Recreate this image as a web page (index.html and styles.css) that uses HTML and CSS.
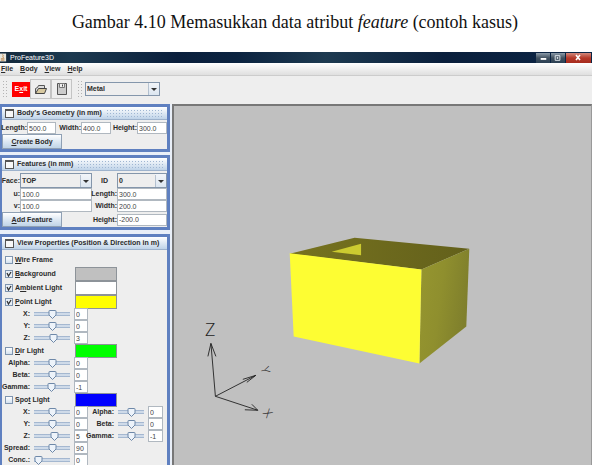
FILE: index.html
```html
<!DOCTYPE html>
<html lang="id">
<head>
<meta charset="utf-8">
<title>ProFeature3D</title>
<link rel="stylesheet" href="styles.css">
</head>
<body>
<h1 class="caption">Gambar 4.10 Memasukkan data atribut <em>feature</em> (contoh kasus)</h1>
<main class="window">
  <header class="titlebar">
    <svg class="app-icon" viewBox="0 0 8 9" aria-hidden="true"><path fill="#e8e6dc" d="M0 0h7v9H0z"/><path d="M3 1c2 1-1 2 1 4M1 6h4M1 7.5h4" fill="none" stroke="#b97a3a"/></svg>
    <span class="title">ProFeature3D</span>
    <div class="controls">
      <button class="ctl" aria-label="Minimize"><svg viewBox="0 0 15 10"><path d="M5 5h6v2H5z" fill="#fff"/></svg></button>
      <button class="ctl" aria-label="Maximize"><svg viewBox="0 0 15 10"><path d="M4.500 2.500h5v5h-5zM6.500 4.500h1v1h-1z" fill="none" stroke="#e4ebf0"/></svg></button>
      <button class="ctl close" aria-label="Close"><svg viewBox="0 0 25 10"><path d="M10 2l4 5M14 2l-4 5" stroke="#fff" stroke-width="1.600"/></svg></button>
    </div>
  </header>
  <nav class="menu">
    <a href="#"><u>F</u>ile</a><a href="#"><u>B</u>ody</a><a href="#"><u>V</u>iew</a><a href="#"><u>H</u>elp</a>
  </nav>
  <div class="toolbar">
    <span class="grip"></span>
    <button class="tool exit"><span>E<u>x</u>it</span></button>
    <button class="tool" aria-label="Open"><svg viewBox="0 0 14 12"><path d="M1.500 10.500V5.500l2-1 1-2h6v3" fill="#ddd" stroke="#555"/><path d="M1.500 10.500l3-5h8l-2 5z" fill="#d8c9a0" stroke="#444"/></svg></button>
    <button class="tool" aria-label="Save"><svg viewBox="0 0 14 12"><path d="M2.500.5h9v11h-9z" fill="#ccc" stroke="#555"/><path d="M4.500.5h5v4h-5z" fill="#eee" stroke="#777"/><path d="M7.500 1.500v2" stroke="#444"/></svg></button>
    <span class="grip second"></span>
    <select class="combo material" aria-label="Material"><option>Metal</option></select>
  </div>
  <div class="work">
    <aside class="side">
      <section class="panel">
        <h2 class="head"><span class="frame-icon"></span>Body's Geometry (in mm)<i class="dots"></i></h2>
        <div class="dims">
          <label for="bl">Length:</label><input id="bl" value="500.0">
          <label for="bw">Width:</label><input id="bw" value="400.0">
          <label for="bh">Height:</label><input id="bh" value="300.0">
        </div>
        <button class="push"><u>C</u>reate Body</button>
      </section>
      <section class="panel">
        <h2 class="head"><span class="frame-icon"></span>Features (in mm)<i class="dots"></i></h2>
        <div class="features">
          <label for="face">Face:</label><select class="combo" id="face"><option>TOP</option></select>
          <label class="mid" for="fid">ID</label><select class="combo" id="fid"><option>0</option></select>
          <label for="fu">u:</label><input id="fu" value="100.0">
          <label for="fl">Length:</label><input id="fl" value="300.0">
          <label for="fv">v:</label><input id="fv" value="100.0">
          <label for="fw">Width:</label><input id="fw" value="200.0">
          <button class="push"><u>A</u>dd Feature</button>
          <label for="fh">Height:</label><input id="fh" value="-200.0">
        </div>
      </section>
      <section class="panel view">
        <h2 class="head"><span class="frame-icon"></span>View Properties (Position &amp; Direction in m)<i class="dots"></i></h2>
        <div class="toggles">
          <div class="toggle"><label><input type="checkbox"><span><u>W</u>ire Frame</span></label></div>
          <div class="toggle"><label><input type="checkbox" checked><span><u>B</u>ackground</span></label><button class="swatch gray" aria-label="Background color"></button></div>
          <div class="toggle"><label><input type="checkbox" checked><span>A<u>m</u>bient Light</span></label><button class="swatch white" aria-label="Ambient color"></button></div>
          <div class="toggle"><label><input type="checkbox" checked><span><u>P</u>oint Light</span></label><button class="swatch yellow" aria-label="Point color"></button></div>
        </div>
        <div class="sliders">
          <label for="px">X:</label><input type="range" id="px" value="50"><input aria-label="Point X" value="0">
          <label for="py">Y:</label><input type="range" id="py" value="50"><input aria-label="Point Y" value="0">
          <label for="pz">Z:</label><input type="range" id="pz" value="55"><input aria-label="Point Z" value="3">
        </div>
        <div class="toggle"><label><input type="checkbox"><span><u>D</u>ir Light</span></label><button class="swatch green" aria-label="Dir color"></button></div>
        <div class="sliders">
          <label for="da">Alpha:</label><input type="range" id="da" value="50"><input aria-label="Dir Alpha" value="0">
          <label for="db">Beta:</label><input type="range" id="db" value="50"><input aria-label="Dir Beta" value="0">
          <label for="dg">Gamma:</label><input type="range" id="dg" value="48"><input aria-label="Dir Gamma" value="-1">
        </div>
        <div class="toggle"><label><input type="checkbox"><span>Spo<u>t</u> Light</span></label><button class="swatch blue" aria-label="Spot color"></button></div>
        <div class="spot">
          <div class="sliders">
            <label for="sx">X:</label><input type="range" id="sx" value="50"><input aria-label="Spot X" value="0">
            <label for="sy">Y:</label><input type="range" id="sy" value="50"><input aria-label="Spot Y" value="0">
            <label for="sz">Z:</label><input type="range" id="sz" value="58"><input aria-label="Spot Z" value="5">
            <label for="sp">Spread:</label><input type="range" id="sp" value="50"><input aria-label="Spot Spread" value="90">
            <label for="sc">Conc.:</label><input type="range" id="sc" value="0"><input aria-label="Spot Concentration" value="0">
          </div>
          <div class="sliders angles">
            <label for="sa">Alpha:</label><input type="range" id="sa" value="52"><input aria-label="Spot Alpha" value="0">
            <label for="sb">Beta:</label><input type="range" id="sb" value="52"><input aria-label="Spot Beta" value="0">
            <label for="sg">Gamma:</label><input type="range" id="sg" value="52"><input aria-label="Spot Gamma" value="-1">
          </div>
        </div>
      </section>
    </aside>
    <div class="canvas">
      <svg class="scene" viewBox="174 106 418 359" preserveAspectRatio="xMinYMin meet" role="img" aria-label="3D body">
        <defs>
          <linearGradient id="side" x1="0" y1="0" x2="1" y2=".3"><stop offset="0" stop-color="#96962f"/><stop offset=".5" stop-color="#8f8f2e"/><stop offset="1" stop-color="#7f7f2c"/></linearGradient>
          <linearGradient id="top" x1="0" y1="0" x2="1" y2="0"><stop offset="0" stop-color="#77731f"/><stop offset="1" stop-color="#63601b"/></linearGradient>
        </defs>
        <path fill="url(#top)" d="M290 254L355 238 470 249 422 270z"/>
        <path fill="#cccb30" d="M332 252l29.500-8v11.500z"/>
        <path fill="url(#side)" d="M422 270l48-21-3 78-47 37z"/>
        <path fill="#fdfd33" d="M290 253.500L422 270l-2 94-126-27z"/>
        <g fill="none" stroke="#222" stroke-width=".9">
          <path d="M215.500 397L211 344M208 357l3-13 5 13M215.500 397l40.500-21M243 380l13-4-9 7M215.500 397l42.500 14M252 405l6 6-13-.5"/>
        </g>
        <g class="axis">
          <text x="205" y="337">Z</text>
          <text transform="translate(264 373) rotate(75)" class="small" x="-5" y="2">Y</text>
          <text transform="translate(269 414) rotate(50)" class="small" x="-4" y="5">X</text>
        </g>
      </svg>
    </div>
  </div>
</main>
</body>
</html>
```
FILE: styles.css
```css
* { box-sizing: border-box; }
body {
  margin: 0;
  height: 100vh;
  overflow: hidden;
  display: flex;
  flex-direction: column;
  background: #fff;
  color: #2b2b2b;
  font: bold 7px/10px "Liberation Sans", Arial, sans-serif;
}
.caption {
  margin: 0;
  padding: 10px 6px 18px 0;
  text-align: center;
  font: 18px/24px "Liberation Serif", "Times New Roman", serif;
  color: #111;
}
.window {
  flex: 1;
  min-height: 0;
  margin-right: 4px;
  display: flex;
  flex-direction: column;
  background: #eee;
}
button, input, select { font: inherit; color: inherit; margin: 0; border-radius: 0; }
button { padding: 0; border: 0; }

.titlebar {
  display: flex;
  align-items: center;
  height: 11px;
  background: linear-gradient(90deg, #14293c, #1d3a50 12%, #0a1f3c 30%, #0b2340 40%, #1d3a50 55%, #0a1f3c 75%, #0b2545);
  color: #fff;
}
.app-icon { width: 7px; height: 9px; }
.title { margin-left: 3px; font-weight: normal; }
.controls { margin-left: auto; margin-right: 1px; display: flex; gap: 1px; }
.ctl { width: 14px; height: 10px; background: linear-gradient(#8b9aa8, #40505f 50%, #2b4054); }
.ctl svg { display: block; width: 100%; height: 100%; }
.close { width: 25px; background: linear-gradient(#d2897c, #b5392a 50%, #a62a1c); }

.menu {
  display: flex;
  gap: 7px;
  height: 13px;
  padding-left: 1px;
  align-items: center;
  background: linear-gradient(#fff, #dfdfdf);
  border-bottom: 1px solid #ccc;
}
.menu a { color: inherit; text-decoration: none; }

.toolbar { display: flex; align-items: center; height: 28px; padding: 2px 2px 4px; }
.grip {
  width: 6px;
  height: 18px;
  margin-right: 4px;
  background: radial-gradient(#b4b4b4 1px, transparent 1px) 0 0 / 3px 3px;
}
.second { margin: 0 2px 0 5px; }
.tool {
  width: 21px;
  height: 20px;
  display: grid;
  place-items: center;
  background: #eee;
  border: 1px solid #c4c4c4;
}
.tool svg { width: 14px; height: 12px; }
.exit { width: 18px; height: 15px; background: #f00; border: 0; color: #fff; }
.combo {
  appearance: none;
  width: 100%;
  height: 14px;
  padding: 0 0 0 1px;
  border: 1px solid #8496ab;
  background:
    url("data:image/svg+xml,%3Csvg xmlns='http://www.w3.org/2000/svg' width='11' height='12'%3E%3Cpath d='M0 0v12' stroke='%238496ab'/%3E%3Cpath d='M3 5h6l-3 3z' fill='%23333'/%3E%3C/svg%3E") right center no-repeat,
    linear-gradient(#f2f5f9, #dce6f0) right / 11px 100% no-repeat,
    #eee;
}
.material { width: 75px; }

.work { flex: 1; min-height: 0; display: flex; }
.side {
  width: 172px;
  flex: none;
  display: flex;
  flex-direction: column;
  gap: 3px;
  padding-right: 2px;
  background: #e9eff8;
}
.panel { flex: none; border: 3px solid #5f80c0; border-left-width: 2px; background: #eee; }
.panel.view { margin-top: 1px; }
.head {
  display: flex;
  align-items: center;
  height: 13px;
  margin: 0 0 2px;
  padding: 0 3px;
  font: inherit;
  white-space: nowrap;
  background: linear-gradient(#fff, #bfd3e8);
  border-bottom: 1px solid #9db2cc;
}
.frame-icon { flex: none; width: 9px; height: 9px; margin-right: 3px; background: #f8f8f8; border: 1px solid #555; border-top-width: 2px; }
.dots { flex: 1; height: 9px; margin-left: 4px; background: radial-gradient(#9fb6d2 1px, transparent 1px) 0 0 / 3px 3px; }
.push {
  width: 60px;
  height: 15px;
  justify-self: start;
  border: 1px solid #8fa0b4;
  background: linear-gradient(#fff, #dde8f3 50%, #c0d4e7);
}
input:not([type]) {
  min-width: 0;
  width: 100%;
  height: 12px;
  padding: 0 0 0 1px;
  border: 1px solid #b0b8c0;
  background: #fff;
  color: #444;
  font-weight: normal;
}
.dims { display: grid; grid-template-columns: 25px 29px 25px 30px 26px 30px; align-items: center; white-space: nowrap; }
.dims label { justify-self: end; }
.panel > .push { display: block; }
.features { display: grid; grid-template-columns: 18px 72px 25px 50px; align-items: center; }
.features label { justify-self: end; white-space: nowrap; }
.features .mid { justify-self: center; }
.features .push { grid-column: span 2; }
.features .combo { height: 15px; }

.toggles { display: grid; gap: 1px; padding-top: 1px; }
.toggle { display: grid; grid-template-columns: 73px 42px; height: 13px; align-items: center; }
.toggle label { display: flex; align-items: center; gap: 2px; padding-left: 3px; white-space: nowrap; }
input[type="checkbox"] {
  appearance: none;
  width: 8px;
  height: 8px;
  border: 1px solid #7f95b0;
  background: linear-gradient(#fff, #d4e1ef);
}
input[type="checkbox"]:checked {
  background: url("data:image/svg+xml,%3Csvg xmlns='http://www.w3.org/2000/svg' width='6' height='6'%3E%3Cpath d='M1 2l1.500 3L5 1' fill='none' stroke='%23333' stroke-width='1.300'/%3E%3C/svg%3E") center no-repeat, #e8eff7;
}
.swatch { height: 14px; border: 1px solid #8d9399; }
.gray { background: #c0c0c0; }
.white { background: #fff; }
.yellow { background: #ff0; }
.green { background: #0f0; }
.blue { background: #00f; }

.sliders { display: grid; grid-template-columns: 28px 36px 14px; grid-auto-rows: 12px; column-gap: 4px; align-items: center; }
.sliders label { justify-self: end; white-space: nowrap; }
.spot { display: flex; align-items: flex-start; }
.angles { grid-template-columns: 26px 26px 15px; }
input[type="range"] {
  appearance: none;
  width: 100%;
  height: 10px;
  background: linear-gradient(#8fa6c4, #e4ecf5 50%, #8fa6c4) center / 100% 4px no-repeat;
}
input[type="range"]::-webkit-slider-runnable-track { height: 9px; }
input[type="range"]::-webkit-slider-thumb {
  appearance: none;
  width: 9px;
  height: 9px;
  background: url("data:image/svg+xml,%3Csvg xmlns='http://www.w3.org/2000/svg' width='9' height='9'%3E%3Cpath d='M1.500.5h6q.5 0 .5.5v4L4.500 8.500 1 5V1q0-.5.5-.5z' fill='%23edf3fa' stroke='%236e88a8'/%3E%3C/svg%3E") no-repeat;
}

.canvas { flex: 1; min-width: 0; background: #c0c0c0; border-top: 2px solid #777; border-left: 2px solid #777; border-right: 1px solid #999; }
.scene { display: block; width: 100%; height: 100%; }
.axis { font: 300 18px "Open Sans", sans-serif; fill: #222; }
.axis .small { font-size: 12px; }
```
